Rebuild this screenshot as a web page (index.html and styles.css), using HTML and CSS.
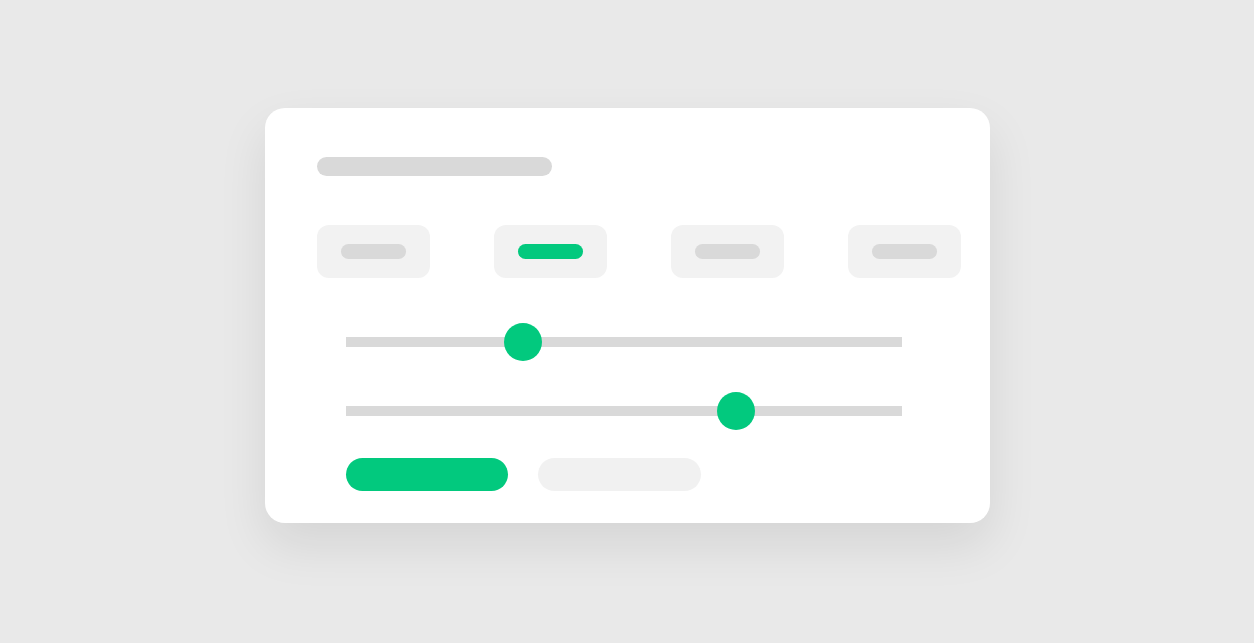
FILE: index.html
```html
<!DOCTYPE html>
<html>
<head>
<meta charset="utf-8">
<link rel="stylesheet" href="styles.css">
</head>
<body>
<div class="card">
  <div class="title"></div>
  <div class="tabs">
    <div class="tab"><span class="pill"></span></div>
    <div class="tab"><span class="pill active"></span></div>
    <div class="tab"><span class="pill"></span></div>
    <div class="tab"><span class="pill"></span></div>
  </div>
  <div class="controls">
    <div class="slider first"><div class="track"><div class="thumb" style="left:31.8%"></div></div></div>
    <div class="slider"><div class="track"><div class="thumb" style="left:70.1%"></div></div></div>
    <div class="buttons">
      <div class="btn primary"></div>
      <div class="btn secondary"></div>
    </div>
  </div>
</div>
</body>
</html>
```
FILE: styles.css
```css
html, body {
  margin: 0;
  padding: 0;
  background: #e9e9e9;
  width: 1254px;
  height: 643px;
  overflow: hidden;
  font-family: "Liberation Sans", sans-serif;
}
body {
  padding-top: 108px;
  padding-left: 265px;
  box-sizing: border-box;
}
.card {
  width: 725px;
  height: 415px;
  box-sizing: border-box;
  background: #ffffff;
  border-radius: 20px;
  padding: 49px 29px 0 52px;
  box-shadow: 0 22px 50px rgba(0, 0, 0, 0.09);
}
.title {
  width: 235px;
  height: 19px;
  border-radius: 10px;
  background: #d9d9d9;
}
.tabs {
  margin-top: 49px;
  display: flex;
  gap: 64px;
}
.tab {
  width: 113px;
  height: 53px;
  border-radius: 12px;
  background: #f2f2f2;
  display: flex;
  align-items: center;
  justify-content: center;
}
.pill {
  display: block;
  width: 65px;
  height: 15px;
  border-radius: 8px;
  background: #d9d9d9;
}
.pill.active {
  background: #02c97e;
}
.controls {
  padding-left: 29px;
  padding-right: 59px;
}
.slider {
  height: 38px;
  display: flex;
  align-items: center;
  margin-top: 31px;
}
.slider.first {
  margin-top: 45px;
}
.track {
  position: relative;
  width: 100%;
  height: 10px;
  background: #d9d9d9;
}
.thumb {
  position: absolute;
  top: 50%;
  width: 38px;
  height: 38px;
  border-radius: 50%;
  background: #02c97e;
  transform: translate(-50%, -50%);
}
.buttons {
  margin-top: 28px;
  display: flex;
  gap: 30px;
}
.btn {
  width: 162px;
  height: 33px;
  border-radius: 17px;
}
.btn.primary {
  background: #02c97e;
}
.btn.secondary {
  background: #f1f1f1;
  width: 163px;
}
```
